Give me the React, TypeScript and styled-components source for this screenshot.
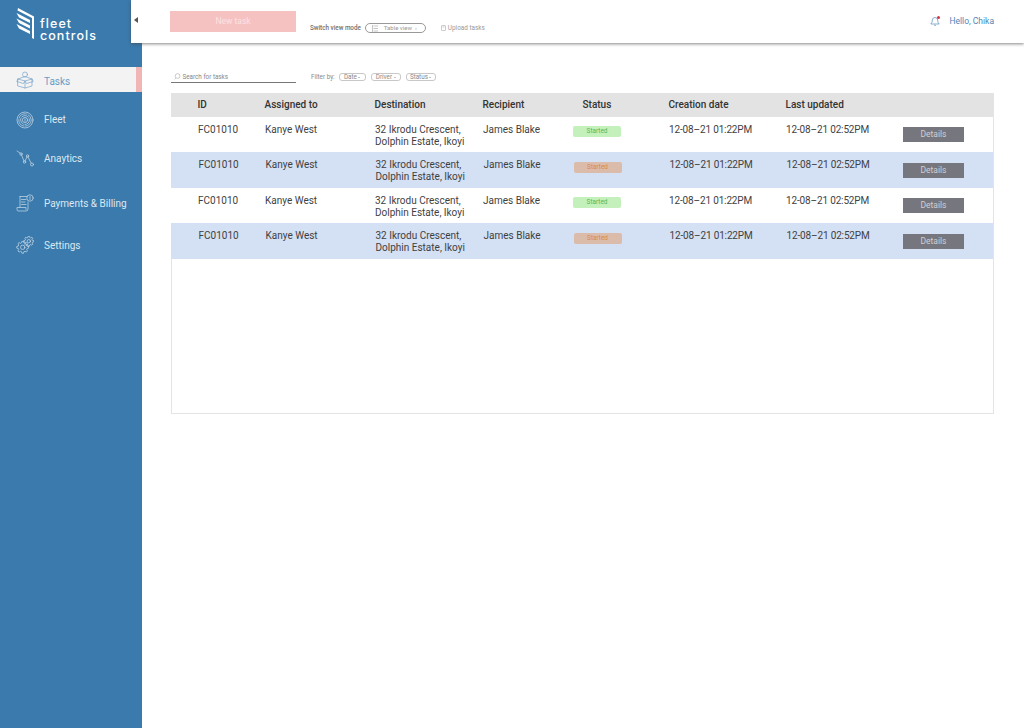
import React from "react";
import styled, { createGlobalStyle } from "styled-components";

const Global = createGlobalStyle`
  html, body { margin: 0; padding: 0; background: #fff; }
  body { font-family: Roboto, "Liberation Sans", sans-serif; }
  * { box-sizing: border-box; }
`;

const Page = styled.div`
  display: flex;
  width: 1024px;
  height: 728px;
  overflow: hidden;
  background: #fff;
`;

const Sidebar = styled.aside`
  width: 142px;
  flex: none;
  background: #3b7aac;
  display: flex;
  flex-direction: column;
`;

const Brand = styled.div`
  height: 67px;
  padding: 8px 0 0 16px;
  display: flex;
  align-items: flex-start;
  gap: 5px;
  color: #fff;
`;

const BrandName = styled.div`
  font-family: Inter, Lato, sans-serif;
  font-size: 12.5px;
  line-height: 11.5px;
  font-weight: 500;
  letter-spacing: 1.05px;
  padding-top: 10px;
`;

const NavItem = styled.div<{ $active?: boolean; $h: number }>`
  height: ${(p) => p.$h}px;
  display: flex;
  align-items: center;
  padding-left: 16px;
  gap: 10px;
  font-size: 10px;
  color: ${(p) => (p.$active ? "#6a9cc5" : "#dce8f2")};
  background: ${(p) => (p.$active ? "#f3f3f3" : "transparent")};
  border-right: ${(p) => (p.$active ? "6px solid #f0b5b5" : "none")};
`;

const NavLabel = styled.span<{ $dy?: number }>`
  padding-top: ${(p) => p.$dy ?? 0}px;
`;

const NavIcon = styled.svg`
  width: 18px;
  height: 18px;
  flex: none;
  fill: none;
  stroke: currentColor;
  stroke-width: 0.7;
  stroke-linecap: round;
  stroke-linejoin: round;
  opacity: 0.9;
`;

const Main = styled.main`
  flex: 1;
  min-width: 0;
  display: flex;
  flex-direction: column;
`;

const Header = styled.header`
  height: 43px;
  margin-left: -11px;
  position: relative;
  background: #fff;
  box-shadow: 0 1px 3px rgba(70, 70, 70, 0.65);
  display: flex;
  align-items: flex-start;
  padding-right: 30px;
`;

const Collapse = styled.div`
  width: 39px;
  flex: none;
  padding: 17px 0 0 3px;
`;

const Caret = styled.div`
  width: 0;
  height: 0;
  border-top: 3px solid transparent;
  border-bottom: 3px solid transparent;
  border-right: 4px solid #555;
`;

const NewTask = styled.button`
  width: 126px;
  height: 21px;
  margin-top: 11px;
  border: none;
  padding: 0 0 1px;
  background: #f5c1c1;
  color: #fbe3e3;
  font: 400 8.5px Roboto, sans-serif;
`;

const ViewMode = styled.div`
  display: flex;
  align-items: center;
  margin: 23px 0 0 14px;
  height: 10px;
`;

const ModeLabel = styled.span`
  font-size: 6.3px;
  font-weight: 500;
  color: #707070;
  margin-right: 4.5px;
  white-space: nowrap;
`;

const ModeButton = styled.div`
  width: 61px;
  height: 10px;
  border: 0.8px solid #999;
  border-radius: 5px;
  display: flex;
  align-items: center;
  padding-left: 6px;
  font-size: 6px;
  line-height: 8px;
  color: #999;
  gap: 5.5px;
  white-space: nowrap;
`;

const Upload = styled.div`
  display: flex;
  align-items: center;
  gap: 2px;
  margin: 24px 0 0 14.5px;
  font-size: 6.4px;
  color: #999;
`;

const Greeting = styled.div`
  margin-left: auto;
  margin-top: 16px;
  display: flex;
  align-items: center;
  gap: 9px;
  font-size: 8.5px;
  color: #4f86b8;
`;

const Bell = styled.div`
  position: relative;
  width: 10px;
  height: 10px;
  display: flex;
`;

const BellDot = styled.span`
  position: absolute;
  top: 0;
  right: 0;
  width: 3px;
  height: 3px;
  border-radius: 50%;
  background: #d8323c;
`;

const Content = styled.div`
  padding: 28px 31px 0 28.5px;
  display: flex;
  flex-direction: column;
`;

const FilterBar = styled.div`
  display: flex;
  align-items: center;
  height: 12px;
  margin-bottom: 10px;
`;

const Search = styled.div`
  width: 125px;
  height: 12px;
  border-bottom: 0.8px solid #777;
  display: flex;
  align-items: center;
  gap: 2px;
  padding-left: 3px;
  font-size: 6.3px;
  color: #888;
`;

const FilterLabel = styled.span`
  font-size: 6.3px;
  color: #888;
  margin: 0 4px 0 15.5px;
`;

const Chip = styled.span<{ $w: number }>`
  width: ${(p) => p.$w}px;
  height: 8px;
  border: 0.7px solid #c8c8c8;
  border-radius: 3px;
  margin-right: 5px;
  display: flex;
  align-items: center;
  justify-content: center;
  font-size: 6.3px;
  color: #888;
  white-space: nowrap;
`;

const ChipCaret = styled.i`
  width: 0;
  height: 0;
  margin-left: 1.5px;
  border-left: 1px solid transparent;
  border-right: 1px solid transparent;
  border-top: 1.2px solid #888;
`;

const Table = styled.div`
  height: 320.5px;
  border: 1px solid #e4e4e4;
  border-top: none;
  width: 823px;
`;

const cols = "67px 110px 108px 100px 86px 117px 117px 1fr";

const HeadRow = styled.div`
  display: grid;
  grid-template-columns: ${cols};
  height: 23.5px;
  margin-left: -1px;
  padding: 0 0 1px 27px;
  background: #e3e3e3;
  align-items: center;
  font-size: 10px;
  font-weight: 500;
  color: #333;
`;

const Row = styled.div<{ $alt?: boolean }>`
  display: grid;
  grid-template-columns: ${cols};
  height: 35.5px;
  margin-left: -1px;
  padding-left: ${(p) => (p.$alt ? 28 : 27.5)}px;
  background: ${(p) => (p.$alt ? "#d4e0f3" : "#fff")};
  font-size: 10px;
  line-height: 12.6px;
  color: #3f3f3f;
`;

const Cell = styled.div<{ $alt?: boolean }>`
  padding-top: ${(p) => (p.$alt ? 6.5 : 7)}px;
  white-space: nowrap;
`;

const DateCell = styled(Cell)`
  letter-spacing: -0.15px;
`;

const Pill = styled.div<{ $alt?: boolean }>`
  width: 48px;
  height: 11px;
  margin: 9.5px 0 0 -10px;
  border-radius: 2px;
  display: flex;
  align-items: center;
  justify-content: center;
  font-size: 6.4px;
  background: ${(p) => (p.$alt ? "#dbbcab" : "#c3f0bb")};
  color: ${(p) => (p.$alt ? "#dd8848" : "#54b85c")};
`;

const Details = styled.button<{ $alt?: boolean }>`
  display: block;
  width: 61px;
  height: 15px;
  margin: ${(p) => (p.$alt ? 10.5 : 10)}px 0 0 ${(p) => (p.$alt ? -0.5 : 0)}px;
  border: none;
  padding: 0;
  background: #76767f;
  color: #cfcfd4;
  font: 400 8.5px Roboto, sans-serif;
`;

function gearPath(cx: number, cy: number, ro: number, ri: number, teeth: number) {
  const pts: string[] = [];
  const step = (Math.PI * 2) / teeth;
  for (let i = 0; i < teeth; i++) {
    const a = i * step;
    const marks: [number, number][] = [
      [ri, a - step * 0.32],
      [ro, a - step * 0.18],
      [ro, a + step * 0.18],
      [ri, a + step * 0.32],
    ];
    marks.forEach(([r, t]) => pts.push(`${(cx + r * Math.cos(t)).toFixed(2)} ${(cy + r * Math.sin(t)).toFixed(2)}`));
  }
  return `M${pts.join(" L")}Z`;
}

const rows = [false, true, false, true];
const heads = ["ID", "Assigned to", "Destination", "Recipient", "Status", "Creation date", "Last updated", ""];

export default function App() {
  return (
    <Page>
      <Global />
      <Sidebar>
        <Brand>
          <svg width="19" height="32" viewBox="0 0 19 32" fill="#fff">
            <path d="M2 0 L18 8.5 V31 L16 30 V10 L1.5 2.5Z" />
            <path d="M0.5 5 L14 12 V15 L3 9.5Z" />
            <path d="M0.5 10.5 L14 17.5 V20.5 L3 15Z" />
            <path d="M0.5 16 L14 23 V26 L3 20.5Z" />
          </svg>
          <BrandName>
            fleet
            <br />
            controls
          </BrandName>
        </Brand>
        <NavItem $active $h={25}>
          <NavIcon viewBox="0 0 18 18">
            <path d="M2 8 L9 5.5 L16 8 V15 L9 17 L2 15Z M2 8 L9 10 L16 8 M9 10 V17 M2 8 L0.8 10.5 L7.5 12.5 L9 10 L10.5 12.5 L17.2 10.5 L16 8" />
            <circle cx="9" cy="3.5" r="2.5" />
          </NavIcon>
          <NavLabel $dy={3}>Tasks</NavLabel>
        </NavItem>
        <NavItem $h={55}>
          <NavIcon viewBox="0 0 18 18">
            <circle cx="9" cy="9" r="8" />
            <circle cx="9" cy="9" r="6.2" strokeDasharray="9 1.5" />
            <circle cx="9" cy="9" r="4.4" strokeDasharray="7 1.5" />
            <circle cx="9" cy="9" r="2.6" />
            <path d="M9 7.8 V10.5" />
          </NavIcon>
          <NavLabel>Fleet</NavLabel>
        </NavItem>
        <NavItem $h={23}>
          <NavIcon viewBox="0 0 18 18">
            <path d="M1 1 L4 3 M5.5 5 L8 11 M9 11 L11 7 M12 7 L15 13" />
            <circle cx="5" cy="4" r="1.2" />
            <circle cx="8.5" cy="12" r="1.2" />
            <circle cx="11.5" cy="6" r="1.2" />
            <circle cx="16" cy="14.5" r="1.5" />
          </NavIcon>
          <NavLabel>Anaytics</NavLabel>
        </NavItem>
        <NavItem $h={66}>
          <NavIcon viewBox="0 0 18 18">
            <path d="M4 2.5 H11 M4 2.5 V13 M12 8 V15 Q12 17 10 17 H2 Q1 17 1 15 V13.5 H10 V15.5 M5.5 5.5 H10 M5.5 8 H9 M5.5 10.5 H10" />
            <circle cx="14" cy="4" r="3.2" />
            <path d="M14 2.5 V4.5 M14 5.3 V5.6" />
          </NavIcon>
          <NavLabel>Payments &amp; Billing</NavLabel>
        </NavItem>
        <NavItem $h={18}>
          <NavIcon viewBox="0 0 18 18">
            <path d={gearPath(6.7, 11.3, 6, 4.6, 8)} />
            <circle cx="6.7" cy="11.3" r="2.2" />
            <path d={gearPath(12.8, 5.2, 5, 3.8, 8)} />
            <circle cx="12.8" cy="5.2" r="1.7" />
          </NavIcon>
          <NavLabel>Settings</NavLabel>
        </NavItem>
      </Sidebar>
      <Main>
        <Header>
          <Collapse>
            <Caret />
          </Collapse>
          <NewTask>New task</NewTask>
          <ViewMode>
            <ModeLabel>Switch view mode</ModeLabel>
            <ModeButton>
              <svg width="6" height="7" viewBox="0 0 6 7" fill="none" stroke="#888" strokeWidth="0.5">
                <path d="M0.5 0 V7 M1.5 1 H6 M1.5 3.5 H6 M1.5 6 H6" />
              </svg>
              <span>Table view &nbsp;›</span>
            </ModeButton>
          </ViewMode>
          <Upload>
            <svg width="5" height="6" viewBox="0 0 5 6" fill="none" stroke="#999" strokeWidth="0.5">
              <rect x="0.5" y="0.5" width="4" height="5" rx="0.5" />
              <path d="M1.5 2 H3.5" />
            </svg>
            <span>Upload tasks</span>
          </Upload>
          <Greeting>
            <Bell>
              <svg width="10" height="10" viewBox="0 0 10 10" fill="none" stroke="#5b8dbb" strokeWidth="0.7">
                <path d="M0.8 8 Q2.4 6.5 2.4 4 Q2.4 1.5 5 1.5 Q7.6 1.5 7.6 4 Q7.6 6.5 9.2 8Z M4 9 Q5 10 6 9" />
              </svg>
              <BellDot />
            </Bell>
            <span>Hello, Chika</span>
          </Greeting>
        </Header>
        <Content>
          <FilterBar>
            <Search>
              <svg width="7" height="7" viewBox="0 0 7 7" fill="none" stroke="#999" strokeWidth="0.5">
                <circle cx="3.6" cy="3" r="2.4" />
                <path d="M2 5 L0.6 6.4" />
              </svg>
              <span>Search for tasks</span>
            </Search>
            <FilterLabel>Filter by:</FilterLabel>
            <Chip $w={27}>Date<ChipCaret /></Chip>
            <Chip $w={30}>Driver<ChipCaret /></Chip>
            <Chip $w={30}>Status<ChipCaret /></Chip>
          </FilterBar>
          <Table>
            <HeadRow>
              {heads.map((h, i) => (
                <div key={i}>{h}</div>
              ))}
            </HeadRow>
            {rows.map((alt, i) => (
              <Row key={i} $alt={alt}>
                <Cell $alt={alt}>FC01010</Cell>
                <Cell $alt={alt}>Kanye West</Cell>
                <Cell $alt={alt}>
                  32 Ikrodu Crescent,
                  <br />
                  Dolphin Estate, Ikoyi
                </Cell>
                <Cell $alt={alt}>James Blake</Cell>
                <Pill $alt={alt}>Started</Pill>
                <DateCell $alt={alt}>12-08–21 01:22PM</DateCell>
                <DateCell $alt={alt}>12-08–21 02:52PM</DateCell>
                <div>
                  <Details $alt={alt}>Details</Details>
                </div>
              </Row>
            ))}
          </Table>
        </Content>
      </Main>
    </Page>
  );
}
